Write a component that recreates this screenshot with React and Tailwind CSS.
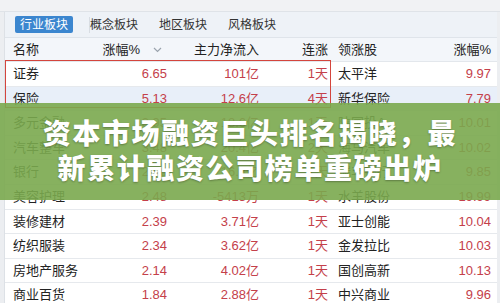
import React from "react";

const rows = [
  ["证券", "6.65", "101亿", "1天", "太平洋", "9.97"],
  ["保险", "5.13", "12.6亿", "4天", "新华保险", "7.79"],
  ["多元金融", "3.95", "18.6亿", "1天", "陕国投A", "10.01"],
  ["汽车整车", "3.48", "20.4亿", "2天", "海马汽车", "10.02"],
  ["银行", "2.96", "16.8亿", "1天", "瑞丰银行", "9.85"],
  ["美容护理", "2.48", "-5413万", "1天", "水羊股份", "19.99"],
  ["装修建材", "2.39", "3.71亿", "1天", "亚士创能", "10.04"],
  ["纺织服装", "2.34", "3.62亿", "1天", "金发拉比", "10.03"],
  ["房地产服务", "2.14", "4.02亿", "1天", "国创高新", "10.13"],
  ["商业百货", "1.84", "2.88亿", "1天", "中兴商业", "9.96"],
];

export default function App() {
  return (
    <div
      className="relative w-[500px] h-[303px] overflow-hidden bg-[#eceef1]"
      style={{ fontFamily: '"Liberation Sans", "Noto Sans CJK SC", sans-serif' }}
    >
      {/* top strip */}
      <div className="h-[12px] border-b border-[#dfe3e8] bg-[#f1f2f4]" />

      <div className="ml-[4px] mr-[3px] bg-white border-l border-[#dde1e6]">
        {/* Tabs */}
        <div className="h-[26px] flex items-center bg-[#eef2f7] border-b border-[#dfe4ea] text-[12px] text-[#333]">
          <div className="ml-[10px] w-[58px] h-[17px] flex items-center justify-center rounded-[2px] bg-[#3b86cf] text-white">
            行业板块
          </div>
          <div className="ml-[16px] border-l border-[#d8dde3] h-[16px]" />
          <span>概念板块</span>
          <span className="ml-[21px]">地区板块</span>
          <span className="ml-[21px]">风格板块</span>
        </div>

        {/* Header */}
        <div className="h-[24px] flex items-center bg-[#f3f6fa] border-b border-[#e3e7ec] text-[13px] text-[#222]">
          <div className="w-[106px] pl-[8px]">名称</div>
          <div className="w-[56px] flex items-center justify-end">
            <span className="shrink-0 whitespace-nowrap">涨幅%</span>
            <svg className="shrink-0 ml-[13px] mr-[5px]" width="9" height="6" viewBox="0 0 9 6">
              <path d="M1 1l3.5 3.5L8 1" fill="none" stroke="#9aa3ad" strokeWidth="1.2" />
            </svg>
          </div>
          <div className="w-[92px] text-right">主力净流入</div>
          <div className="w-[69px] text-right">连涨</div>
          <div className="w-[90px] pl-[10px]">领涨股</div>
          <div className="flex-1 text-right pr-[6px]">涨幅%</div>
        </div>

        {/* Rows */}
        {rows.map((r, i) => (
          <div
            key={r[0]}
            className={
              "h-[24.6px] flex items-center border-b border-[#e6e9ed] text-[13px] " +
              (i === 1 ? "bg-[#e8eff9]" : "bg-white")
            }
          >
            <div className="w-[106px] pl-[8px] text-[#222]">{r[0]}</div>
            <div className="w-[56px] text-right text-[#c4404a]">{r[1]}</div>
            <div className="w-[92px] text-right text-[#c4404a]">{r[2]}</div>
            <div className="w-[69px] text-right text-[#c4404a]">{r[3]}</div>
            <div className="w-[90px] pl-[10px] text-[#222]">{r[4]}</div>
            <div className="flex-1 text-right pr-[6px] text-[#c4404a]">{r[5]}</div>
          </div>
        ))}
      </div>

      {/* highlight box */}
      <div className="absolute left-[5px] top-[60px] w-[326px] h-[48px] border-[1.5px] border-[#d4453d]" />

      {/* green title band */}
      <div className="absolute left-0 right-0 top-[103px] h-[97px] bg-[#7aa84e]/[0.9] flex flex-col items-center justify-center pb-[4px]">
        <div
          className="text-white font-black text-[28px] leading-[35px] tracking-[1.6px] [text-shadow:0_1px_2px_rgba(0,0,0,0.3)]"
          style={{ fontFamily: '"Noto Sans CJK SC", sans-serif' }}
        >
          资本市场融资巨头排名揭晓，最
        </div>
        <div
          className="text-white font-black text-[28px] leading-[35px] tracking-[1.6px] [text-shadow:0_1px_2px_rgba(0,0,0,0.3)]"
          style={{ fontFamily: '"Noto Sans CJK SC", sans-serif' }}
        >
          新累计融资公司榜单重磅出炉
        </div>
      </div>
    </div>
  );
}
